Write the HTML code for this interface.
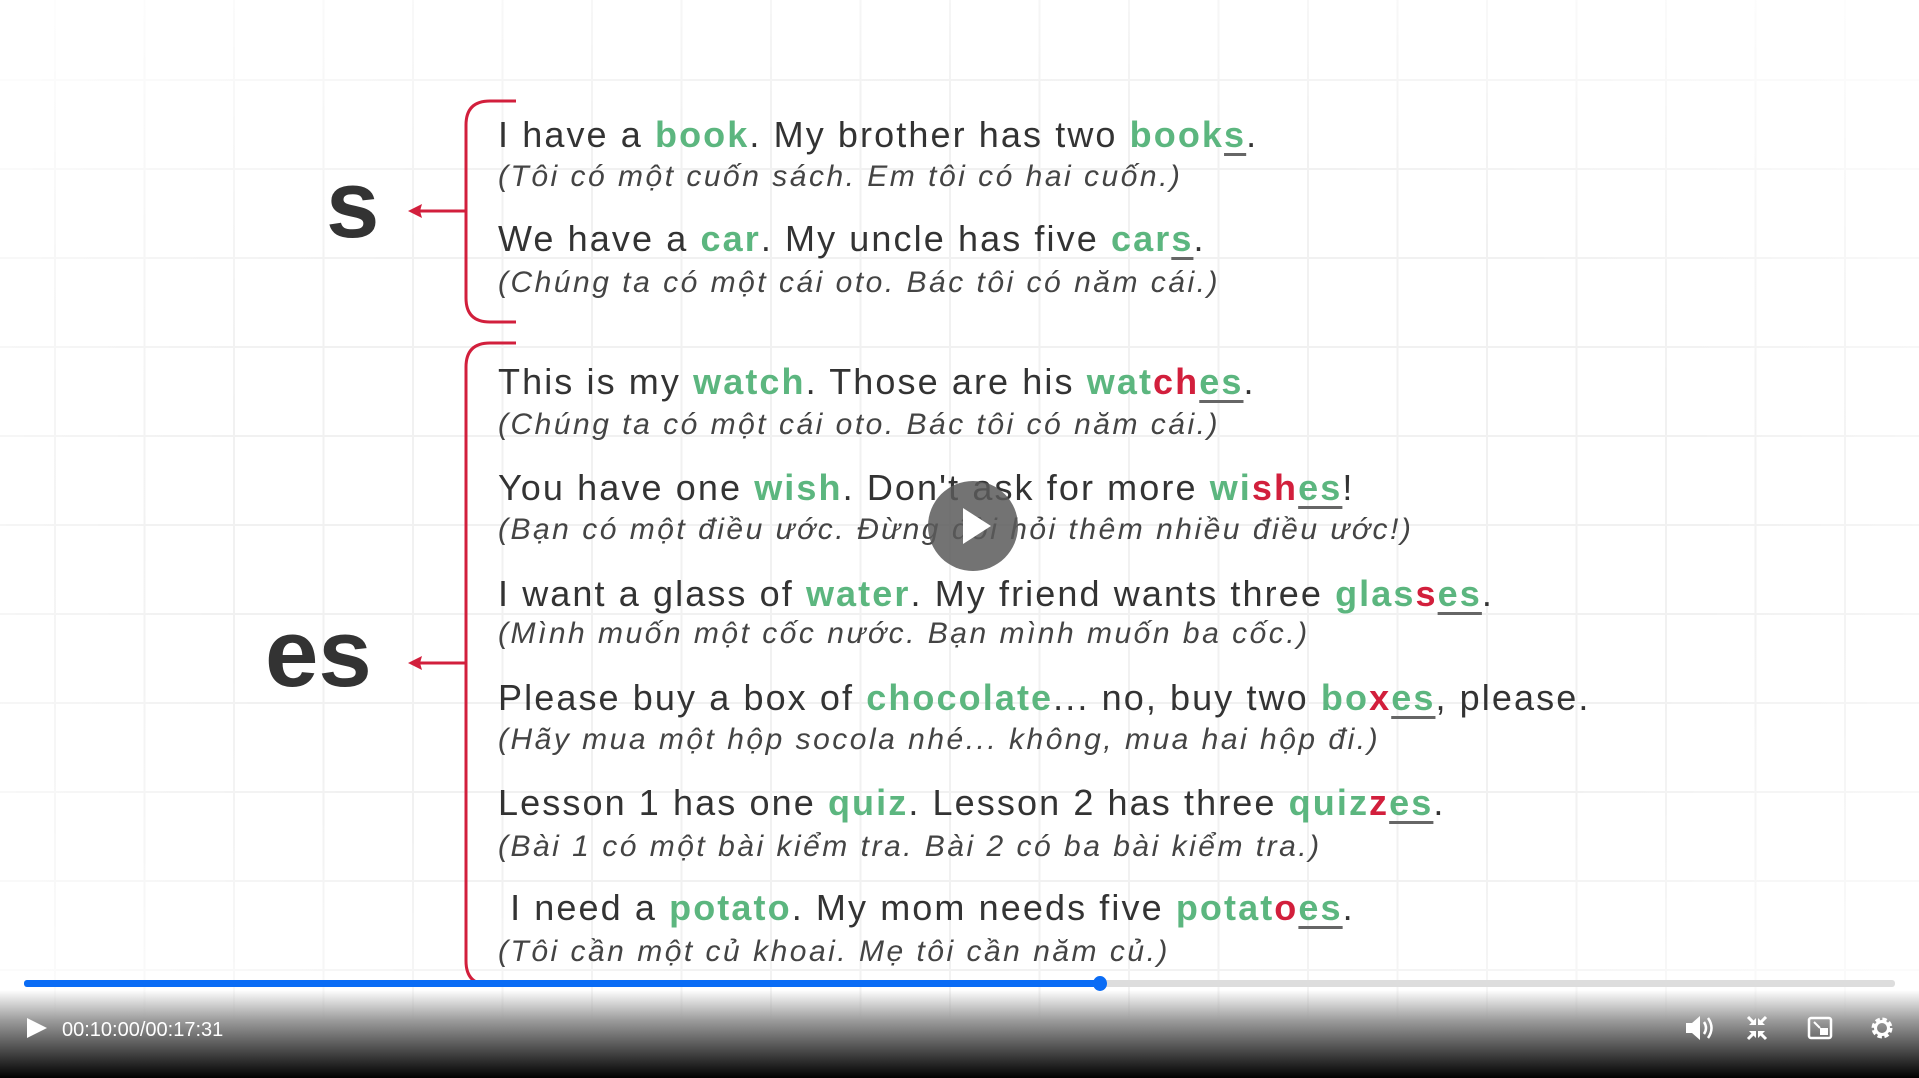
<!DOCTYPE html>
<html><head><meta charset="utf-8"><style>
html,body{margin:0;padding:0;}
body{width:1919px;height:1078px;position:relative;overflow:hidden;background:#fff;font-family:"Liberation Sans",sans-serif;}
.grid{position:absolute;left:0;top:0;width:1919px;height:1078px;
background-image:linear-gradient(to right,#f1f1f1 2px,transparent 2px),linear-gradient(to bottom,#f1f1f1 2px,transparent 2px);
background-size:89.5px 89px;background-position:54px 79px;}
.fade{position:absolute;left:0;top:0;width:1919px;height:1078px;background:radial-gradient(ellipse at center,rgba(255,255,255,0) 55%,rgba(255,255,255,0.95) 100%);}
.l{position:absolute;left:498px;white-space:nowrap;color:#333;font-size:36px;line-height:40px;letter-spacing:2.1px;}
.i{position:absolute;left:498px;white-space:nowrap;color:#444;font-size:30px;line-height:36px;font-style:italic;letter-spacing:2.5px;}
.g{color:#5cb67f;font-weight:bold;}
.r{color:#d21f3c;font-weight:bold;}
.u{text-decoration:underline;text-decoration-color:#666;text-underline-offset:6px;}
.big{position:absolute;font-weight:bold;color:#333;font-size:96px;line-height:100px;}
.ctrl{position:absolute;left:0;top:990px;width:1919px;height:88px;background:linear-gradient(to bottom,rgba(255,255,255,0) 0%,#9a9a9a 35%,#000 100%);}
</style></head><body>
<div class="grid"></div><div class="fade"></div>

<svg style="position:absolute;left:0;top:0" width="1919" height="1078">
<g fill="none" stroke="#d21f3c" stroke-width="3">
<path d="M516 101 H490 Q466 101 466 125 V298 Q466 322 490 322 H516"/>
<path d="M516 343 H490 Q466 343 466 367 V961 Q466 985 490 985 H516"/>
<path d="M466 211 H418"/><path d="M466 663 H418"/>
</g>
<g fill="#d21f3c"><path d="M408 211 L422 204 L420 211 L422 218 Z"/><path d="M408 663 L422 656 L420 663 L422 670 Z"/></g>
</svg>

<div class="big" style="left:326px;top:155px;">s</div>
<div class="big" style="left:265px;top:604px;">es</div>

<div class="l" style="top:115px">I have a <span class="g">book</span>. My brother has two <span class="g">book<span class="u">s</span></span>.</div>
<div class="i" style="top:159px">(Tôi có một cuốn sách. Em tôi có hai cuốn.)</div>
<div class="l" style="top:219px">We have a <span class="g">car</span>. My uncle has five <span class="g">car<span class="u">s</span></span>.</div>
<div class="i" style="top:265px">(Chúng ta có một cái oto. Bác tôi có năm cái.)</div>
<div class="l" style="top:362px">This is my <span class="g">watch</span>. Those are his <span class="g">wat</span><span class="r">ch</span><span class="g u">es</span>.</div>
<div class="i" style="top:407px">(Chúng ta có một cái oto. Bác tôi có năm cái.)</div>
<div class="l" style="top:468px">You have one <span class="g">wish</span>. Don't ask for more <span class="g">wi</span><span class="r">sh</span><span class="g u">es</span>!</div>
<div class="i" style="top:512px">(Bạn có một điều ước. Đừng đòi hỏi thêm nhiều điều ước!)</div>
<div class="l" style="top:574px">I want a glass of <span class="g">water</span>. My friend wants three <span class="g">glas</span><span class="r">s</span><span class="g u">es</span>.</div>
<div class="i" style="top:616px">(Mình muốn một cốc nước. Bạn mình muốn ba cốc.)</div>
<div class="l" style="top:678px">Please buy a box of <span class="g">chocolate</span>... no, buy two <span class="g">bo</span><span class="r">x</span><span class="g u">es</span>, please.</div>
<div class="i" style="top:722px">(Hãy mua một hộp socola nhé... không, mua hai hộp đi.)</div>
<div class="l" style="top:783px">Lesson 1 has one <span class="g">quiz</span>. Lesson 2 has three <span class="g">quiz</span><span class="r">z</span><span class="g u">es</span>.</div>
<div class="i" style="top:829px">(Bài 1 có một bài kiểm tra. Bài 2 có ba bài kiểm tra.)</div>
<div class="l" style="top:888px">&nbsp;I need a <span class="g">potato</span>. My mom needs five <span class="g">potat</span><span class="r">o</span><span class="g u">es</span>.</div>
<div class="i" style="top:934px">(Tôi cần một củ khoai. Mẹ tôi cần năm củ.)</div>

<svg style="position:absolute;left:928px;top:481px" width="90" height="90">
<circle cx="45" cy="45" r="45" fill="rgba(90,90,90,0.85)"/>
<path d="M35 27 L63 45 L35 63 Z" fill="#fff"/>
</svg>

<div class="ctrl"></div>
<div style="position:absolute;left:24px;top:980px;width:1871px;height:7px;background:#ddd;border-radius:3px"></div>
<div style="position:absolute;left:24px;top:980px;width:1076px;height:7px;background:#0a6cf5;border-radius:3px"></div>
<div style="position:absolute;left:1093px;top:976px;width:14px;height:15px;background:#0a6cf5;border-radius:50%"></div>

<svg style="position:absolute;left:0;top:1010px" width="1919" height="40">
<path d="M27 8 L47 18 L27 28 Z" fill="#fff"/>
<g fill="#fff" stroke="#fff">
<path d="M1686 13 H1692 L1700 6 V30 L1692 23 H1686 Z" stroke="none"/>
<path d="M1704 12 Q1708 18 1704 24 M1708 8 Q1715 18 1708 28" fill="none" stroke-width="2.5"/>
<path d="M1748 7 L1755 14 M1766 7 L1759 14 M1748 29 L1755 22 M1766 29 L1759 22" stroke-width="3"/>
<path d="M1749 15 H1756 V8 Z M1765 15 H1758 V8 Z M1749 21 H1756 V28 Z M1765 21 H1758 V28 Z" stroke="none"/>
<rect x="1809" y="8" width="22" height="20" rx="2" fill="none" stroke-width="2.5"/>
<rect x="1820" y="18" width="8" height="7" stroke="none"/>
<path d="M1814 12 L1820 18" stroke-width="2"/>
<circle cx="1882" cy="18" r="8" stroke-width="5" fill="none" stroke-dasharray="4 2.3"/>
<circle cx="1882" cy="18" r="6.5" fill="none" stroke-width="3"/>
</g>
<text x="62" y="26" fill="#fff" font-family="Liberation Sans" font-size="20">00:10:00/00:17:31</text>
</svg>
</body></html>
